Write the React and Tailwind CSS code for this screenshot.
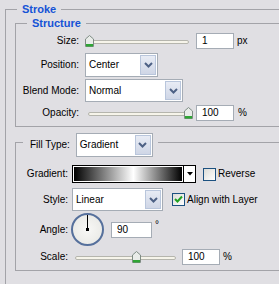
import React from "react";

const Chevron = () => (
  <svg width="9" height="6" viewBox="0 0 9 6">
    <polyline points="1,1 4.5,4.5 8,1" fill="none" stroke="#4d6185" strokeWidth="2" />
  </svg>
);

const Select = ({ value, width, height = 23 }) => (
  <div
    className="flex items-center bg-white border border-[#a5acb5] pl-[3px] pr-[1px]"
    style={{ width, height }}
  >
    <span className="flex-1">{value}</span>
    <div className="w-[16px] h-[calc(100%-2px)] flex items-center justify-center border border-[#b9c6dc] bg-gradient-to-b from-[#e8ecf5] to-[#cfd6e6]">
      <Chevron />
    </div>
  </div>
);

const Input = ({ value, width }) => (
  <div
    className="h-[16px] flex items-center bg-white border border-[#a5acb5] pl-[5px]"
    style={{ width }}
  >
    {value}
  </div>
);

const Thumb = () => (
  <svg width="9" height="12" viewBox="0 0 9 12">
    <polygon points="0.5,4 4.5,0.5 8.5,4 8.5,11.5 0.5,11.5" fill="#e9ece9" stroke="#7f8c84" />
    <rect x="1" y="9" width="7" height="2.5" fill="#2fa535" />
  </svg>
);

const Slider = ({ thumbLeft }) => (
  <div className="relative w-[108px] h-[12px]">
    <div className="absolute left-[3px] right-[4px] top-[5px] h-[4px] rounded-full border border-[#b5b5ad] bg-[#f6f4ea]" />
    <div className="absolute top-0" style={{ left: thumbLeft }}>
      <Thumb />
    </div>
  </div>
);

const Checkbox = ({ checked }) => (
  <div className="w-[13px] h-[13px] border border-[#1c5180] bg-gradient-to-br from-[#dcdcd7] to-white flex items-center justify-center">
    {checked && (
      <svg width="9" height="9" viewBox="0 0 9 9">
        <polyline points="1,4 3.5,6.5 8,1.5" fill="none" stroke="#21a121" strokeWidth="2" />
      </svg>
    )}
  </div>
);

const Title = ({ children, className }) => (
  <div className={`absolute px-[5px] bg-[#e0dfe3] text-[11px] leading-[14px] font-bold text-[#1553d6] ${className}`}>
    {children}
  </div>
);

const Row = ({ label, labelW, gap, className, children }) => (
  <div className={`flex items-center ${className}`}>
    <div className="text-right shrink-0" style={{ width: labelW, marginRight: gap }}>
      {label}
    </div>
    {children}
  </div>
);

export default function App() {
  return (
    <div className="w-[279px] h-[284px] overflow-hidden bg-[#e0dfe3] text-[10px] leading-[12px] text-black font-['Liberation_Sans',Arial,sans-serif]">
      <div className="pt-[9px] pl-[5px]">
        <div className="relative w-[320px] h-[300px] border-l border-t border-[#a3a3a8]">
          <Title className="left-[11px] top-[-8px]">Stroke</Title>

          <div className="relative ml-[9px] mt-[13px] w-[300px] border-l border-t border-b border-[#a3a3a8] pt-[9px] pb-[5px]">
            <Title className="left-[11px] top-[-8px]">Structure</Title>
            <Row label="Size:" labelW={63} gap={6} className="h-[16px]">
              <Slider thumbLeft={0} />
              <div className="ml-[3px]"><Input value="1" width={38} /></div>
              <span className="ml-[3px]">px</span>
            </Row>
            <Row label="Position:" labelW={63} gap={6} className="h-[24px] mt-[4px]">
              <Select value="Center" width={73} height={24} />
            </Row>
            <Row label="Blend Mode:" labelW={63} gap={6} className="h-[23px] mt-[2px]">
              <Select value="Normal" width={98} />
            </Row>
            <Row label="Opacity:" labelW={63} gap={6} className="h-[16px] mt-[3px]">
              <Slider thumbLeft={99} />
              <div className="ml-[3px]"><Input value="100" width={38} /></div>
              <span className="ml-[4px]">%</span>
            </Row>
          </div>

          <div className="relative ml-[9px] mt-[15px] w-[300px] border-l border-t border-b border-[#a3a3a8] pt-[22px] pb-[5px]">
            <div className="absolute left-[7px] top-[-10px] h-[24px] flex items-center bg-[#e0dfe3] pl-[7px] pr-[5px]">
              <span className="mr-[6px]">Fill Type:</span>
              <Select value="Gradient" width={77} height={24} />
            </div>
            <Row label="Gradient:" labelW={52} gap={4} className="h-[18px]">
              <div className="w-[124px] h-[18px] flex border border-black">
                <div className="flex-1 border border-white bg-[linear-gradient(to_right,#000,#fff_55%,#000)]" />
                <div className="w-[12px] bg-white border-l border-black flex items-center justify-center">
                  <svg width="6" height="4" viewBox="0 0 6 4">
                    <polygon points="0,0 6,0 3,3.5" fill="#000" />
                  </svg>
                </div>
              </div>
              <div className="ml-[7px]"><Checkbox /></div>
              <span className="ml-[2px]">Reverse</span>
            </Row>
            <Row label="Style:" labelW={52} gap={4} className="h-[23px] mt-[5px]">
              <Select value="Linear" width={91} />
              <div className="ml-[9px]"><Checkbox checked /></div>
              <span className="ml-[2px]">Align with Layer</span>
            </Row>
            <Row label="Angle:" labelW={52} gap={3} className="h-[33px] mt-[2px]">
              <div className="relative w-[33px] h-[33px] rounded-full border-2 border-[#56709c] bg-[radial-gradient(circle,#f8f8f6,#e6e6e2)]">
                <div className="absolute left-[14px] top-0 w-[1px] h-[15px] bg-black" />
                <div className="absolute left-[13px] top-[13px] w-[3px] h-[3px] bg-black" />
              </div>
              <div className="ml-[7px]"><Input value="90" width={41} /></div>
              <span className="ml-[3px] self-start mt-[6px]">°</span>
            </Row>
            <Row label="Scale:" labelW={52} gap={4} className="h-[16px] mt-[3px]">
              <Slider thumbLeft={60} />
              <div className="ml-[2px]"><Input value="100" width={38} /></div>
              <span className="ml-[3px]">%</span>
            </Row>
          </div>
        </div>
      </div>
    </div>
  );
}
